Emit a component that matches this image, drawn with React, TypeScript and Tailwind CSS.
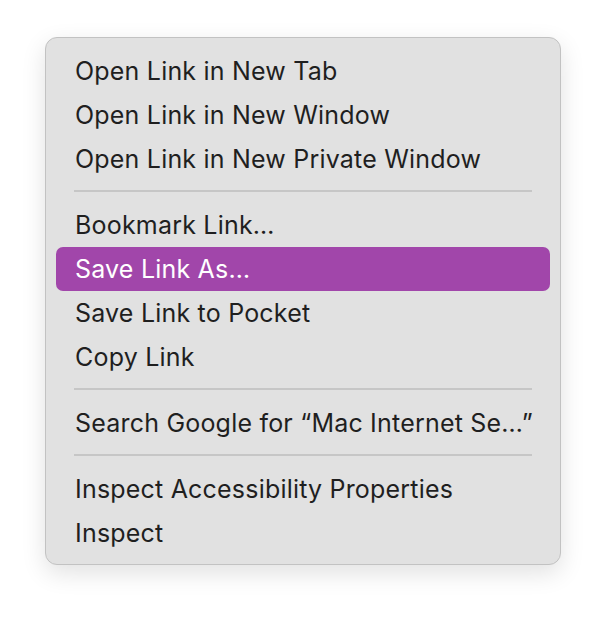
import React from "react";

type Entry = { label: string; active?: boolean } | "sep";

const entries: Entry[] = [
  { label: "Open Link in New Tab" },
  { label: "Open Link in New Window" },
  { label: "Open Link in New Private Window" },
  "sep",
  { label: "Bookmark Link…" },
  { label: "Save Link As…", active: true },
  { label: "Save Link to Pocket" },
  { label: "Copy Link" },
  "sep",
  { label: "Search Google for “Mac Internet Se…”" },
  "sep",
  { label: "Inspect Accessibility Properties" },
  { label: "Inspect" },
];

export default function App() {
  return (
    <div className="w-[606px] h-[618px] bg-white pt-[37px] pl-[45px]" style={{ fontFamily: "Inter, 'Noto Sans', sans-serif" }}>
      <div className="w-[516px] h-[528px] bg-[#e1e1e1] border border-[#c2c2c2] rounded-[12px] shadow-[0_8px_24px_rgba(0,0,0,0.12)] pt-[11px] px-[10px]">
        {entries.map((e, i) =>
          e === "sep" ? (
            <div key={i} className="h-[22px] pt-[9px] px-[18px]">
              <div className="w-full h-[2px] bg-[#c6c6c6]" />
            </div>
          ) : (
            <div
              key={i}
              className={`h-[44px] flex items-center pt-[2px] px-[19px] rounded-[7px] text-[25px] tracking-[0.2px] whitespace-nowrap ${
                e.active ? "bg-[#a146aa] text-white" : "text-[#1f1f1f]"
              }`}
            >
              {e.label}
            </div>
          )
        )}
      </div>
    </div>
  );
}
